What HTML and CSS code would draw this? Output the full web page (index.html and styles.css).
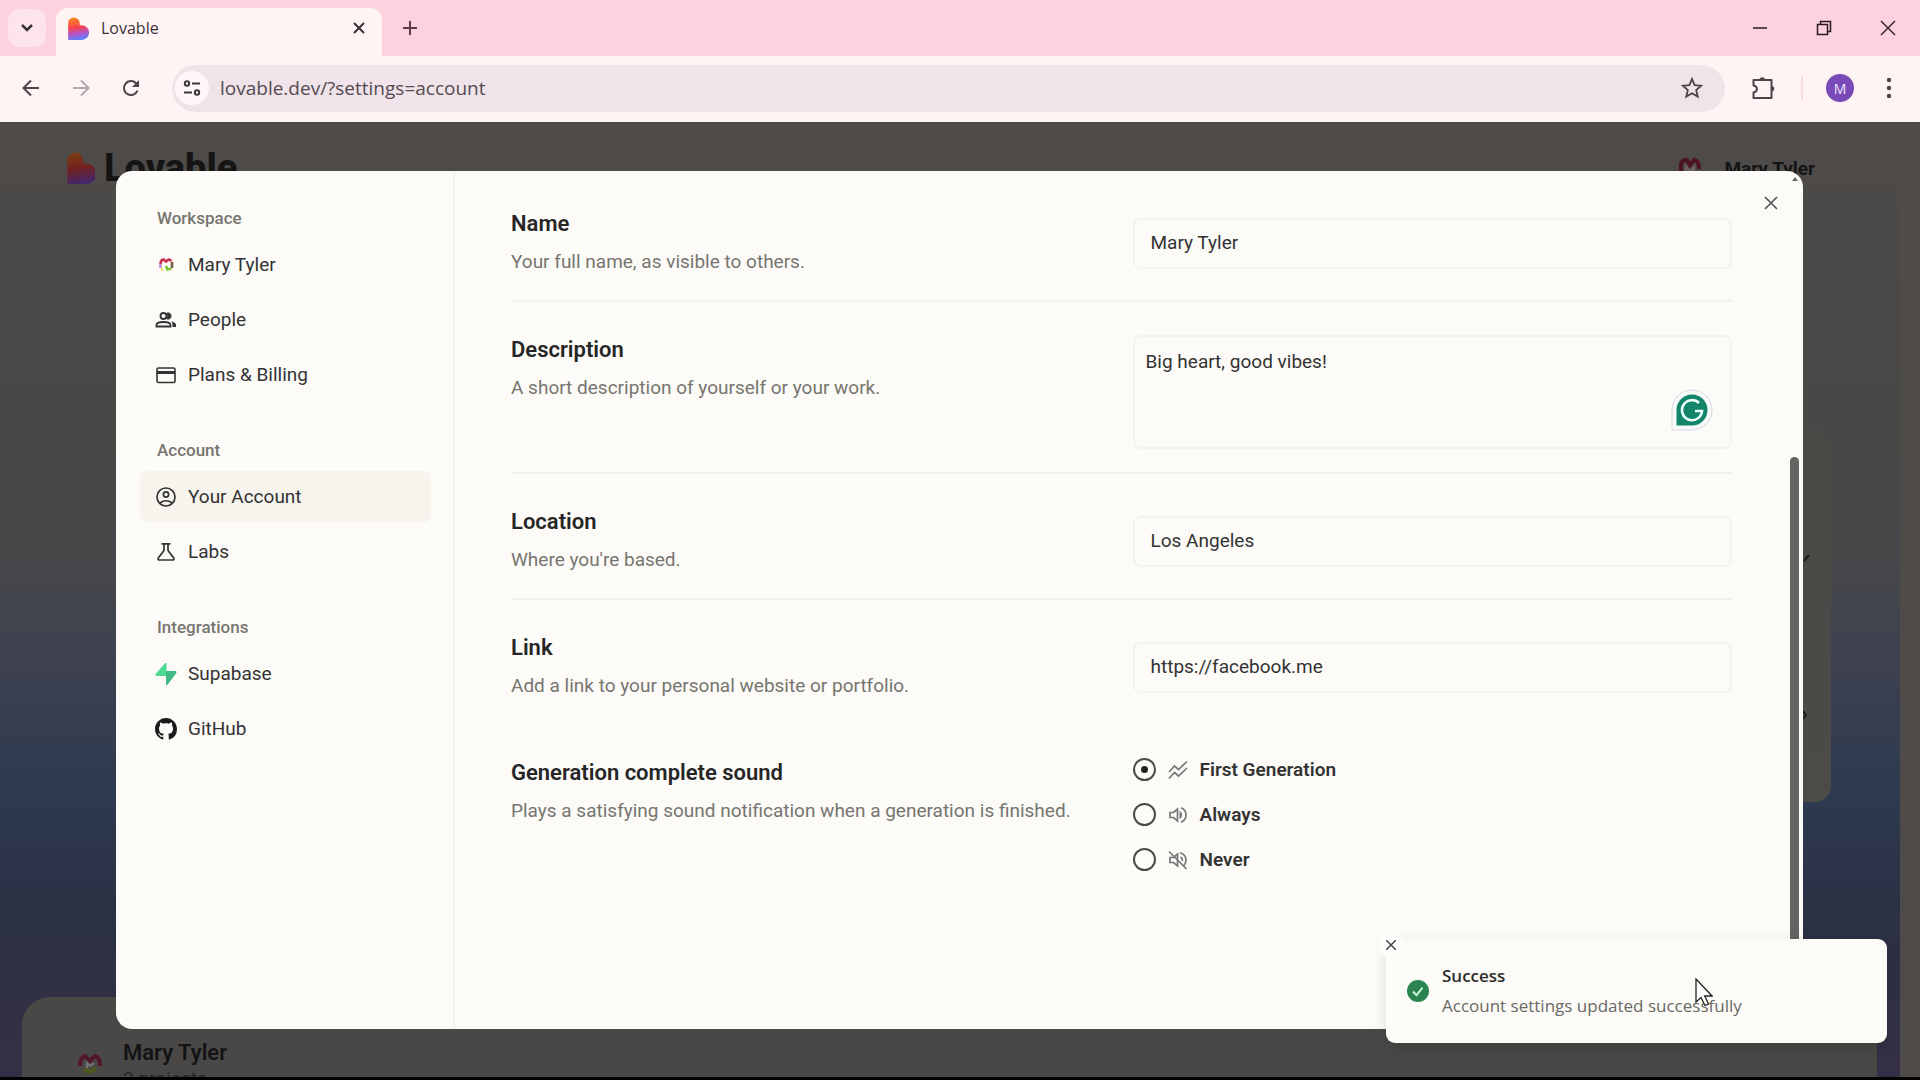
FILE: index.html
```html
<!DOCTYPE html>
<html lang="en">
<head>
  <meta charset="UTF-8">
  <meta name="viewport" content="width=device-width, initial-scale=1.0">
  <title>Lovable</title>
  <link rel="stylesheet" href="styles.css">
</head>
<body>

  <!-- shared shapes -->
  <svg class="defs" width="0" height="0">
    <defs>
      <linearGradient id="heartFill" x1="0.3" y1="0" x2="0.45" y2="1">
        <stop offset="0" stop-color="#ff8a1f"/>
        <stop offset="0.45" stop-color="#f5424e"/>
        <stop offset="0.72" stop-color="#b455c8"/>
        <stop offset="1" stop-color="#5b82ff"/>
      </linearGradient>
      <linearGradient id="heartDim" x1="0.3" y1="0" x2="0.45" y2="1">
        <stop offset="0" stop-color="#7d3c12"/>
        <stop offset="0.5" stop-color="#702020"/>
        <stop offset="1" stop-color="#45266f"/>
      </linearGradient>
      <symbol id="heart" viewBox="0 0 24 28">
        <path d="M0 7.500a7 7 0 0 1 14 0V10h2.500a8.500 8.500 0 0 1 0 18H0z"/>
      </symbol>
    </defs>
  </svg>

  <div class="tab-strip">
    <button class="tab-search" aria-label="Search tabs">
      <svg width="14" height="10" viewBox="0 0 14 10"><path d="M2 2l5 5 5-5" fill="none" stroke="#3a3136" stroke-width="2.500"/></svg>
    </button>
    <div class="tab">
      <svg class="tab-icon" width="22" height="23" fill="url(#heartFill)"><use href="#heart"/></svg>
      <span class="tab-title">Lovable</span>
      <button class="plain" aria-label="Close tab">
        <svg width="12" height="12" viewBox="0 0 12 12"><path d="M1 1l10 10M11 1L1 11" stroke="#3a3136" stroke-width="2"/></svg>
      </button>
    </div>
    <button class="plain new-tab" aria-label="New tab">
      <svg width="16" height="16" viewBox="0 0 16 16"><path d="M8 1v14M1 8h14" stroke="#5f3b49" stroke-width="2"/></svg>
    </button>
    <div class="window-buttons">
      <button class="plain" aria-label="Minimize"><svg width="16" height="16" viewBox="0 0 16 16"><path d="M1 8h14" stroke="#2b1a20" stroke-width="1.500"/></svg></button>
      <button class="plain" aria-label="Restore"><svg width="16" height="16" viewBox="0 0 16 16"><path d="M1.500 4.500h10v10h-10zM4.500 4.500v-3h10v10h-3" fill="none" stroke="#2b1a20" stroke-width="1.500"/></svg></button>
      <button class="plain" aria-label="Close"><svg width="16" height="16" viewBox="0 0 16 16"><path d="M1 1l14 14M15 1L1 15" stroke="#3a2a30" stroke-width="1.500"/></svg></button>
    </div>
  </div>

  <div class="toolbar">
    <button class="plain nav-button" aria-label="Back"><svg width="18" height="18" viewBox="0 0 18 18"><path d="M17 9H2M9 1.500L1.500 9 9 16.500" fill="none" stroke="#4b4347" stroke-width="2"/></svg></button>
    <button class="plain nav-button" aria-label="Forward"><svg width="18" height="18" viewBox="0 0 18 18"><path d="M1 9h15M9 1.500L16.500 9 9 16.500" fill="none" stroke="#b3aaad" stroke-width="2"/></svg></button>
    <button class="plain nav-button" aria-label="Reload"><svg width="18" height="18" viewBox="0 0 18 18"><path d="M15.500 11.500A7 7 0 1 1 14 4.200l2 2.300" fill="none" stroke="#4b4347" stroke-width="2"/><path d="M17 1v7h-7z" fill="#4b4347"/></svg></button>
    <div class="address-bar">
      <button class="site-info" aria-label="View site information">
        <svg width="18" height="18" viewBox="0 0 18 18"><g fill="none" stroke="#3f393c" stroke-width="2"><circle cx="4" cy="4.500" r="2.200"/><path d="M9 4.500h8M1 13.500h8"/><circle cx="14" cy="13.500" r="2.200"/></g></svg>
      </button>
      <input class="address" type="text" aria-label="Address" value="lovable.dev/?settings=account">
      <button class="plain" aria-label="Bookmark this tab">
        <svg width="22" height="22" viewBox="0 0 22 22"><path d="M11 2l2.600 6.100 6.600.6-5 4.400 1.500 6.500L11 16.200l-5.700 3.400 1.500-6.500-5-4.400 6.600-.6z" fill="none" stroke="#4b4347" stroke-width="1.800"/></svg>
      </button>
    </div>
    <button class="plain extensions" aria-label="Extensions">
      <svg width="24" height="24" viewBox="0 0 24 24"><path d="M2.500 4h18v18h-18v-5.500c4.500-.6 4.500-6.400 0-7z" fill="none" stroke="#4b4347" stroke-width="2" stroke-linejoin="round"/><path d="M8.500 4a2.700 2.700 0 0 1 5.400 0zM20.500 10a2.700 2.700 0 0 1 0 5.400z" fill="#4b4347"/></svg>
    </button>
    <span class="toolbar-divider"></span>
    <button class="profile" aria-label="Profile">M</button>
    <button class="plain" aria-label="Menu">
      <svg width="6" height="22" viewBox="0 0 6 22" fill="#4b4347"><circle cx="3" cy="3" r="2.200"/><circle cx="3" cy="11" r="2.200"/><circle cx="3" cy="19" r="2.200"/></svg>
    </button>
  </div>

  <div class="viewport">

    <!-- Page under the dialog -->
    <div class="page">
      <div class="page-header">
        <svg width="28" height="32" fill="url(#heartDim)"><use href="#heart"/></svg>
        <span class="brand">Lovable</span>
        <span class="page-user">
          <svg width="24" height="24" viewBox="0 0 24 24" fill="none" stroke-width="4"><path d="M3 18V8q2-5 6-4l3 5 4-5q5 0 5 9" stroke="#4f1422"/><path d="M8 17v-6l4 4 4-4v5" stroke="#6d6468" stroke-width="2"/></svg>
          Mary Tyler
        </span>
      </div>
      <div class="prompt-card">
        <svg class="prompt-mark" width="8" height="170" viewBox="0 0 8 170" fill="none" stroke="#1c1c1c" stroke-width="2"><path d="M1 8l5-6M0 158l3 4-3 4"/></svg>
      </div>
      <div class="projects-card">
        <svg width="26" height="22" viewBox="0 0 26 22" fill="none" stroke-width="4"><path d="M3 13q0-9 5-10l5 5 5-5q5 1 5 10" stroke="#54172a"/><path d="M7 16q6 5 12-1" stroke="#4c5a1c"/><path d="M10 15v-5l3 3 4-3" stroke="#777" stroke-width="2"/></svg>
        <div>
          <div class="projects-name">Mary Tyler</div>
          <div class="projects-count">2 projects</div>
        </div>
      </div>
      <div class="page-scroll"></div>
    </div>

    <!-- Settings dialog -->
    <div class="dialog" role="dialog" aria-label="Settings">
      <nav class="sidebar">
        <div class="group">
          <div class="group-title">Workspace</div>
          <a class="item" href="#">
            <svg width="20" height="20" viewBox="0 0 20 20" fill="none" stroke-width="2.600"><path d="M4.500 9q0-4 3-4.500l2.500 2 2.500-2q2 0 2.500 2" stroke="#c9304f"/><path d="M4.500 9v4" stroke="#c58ad0"/><path d="M16 7v6" stroke="#6f5a3c"/><path d="M5 14.500h2" stroke="#eddc4a"/><path d="M10 11l1.500 3.500 4-1" stroke="#7cbf3a"/></svg>
            Mary Tyler
          </a>
          <a class="item" href="#">
            <svg width="22" height="20" viewBox="0 0 22 20" fill="none" stroke="#333" stroke-width="1.800"><circle cx="8.500" cy="6" r="3"/><path d="M1.500 16.500v-1.500q0-3 7-3t7 3v1.500z"/><path d="M12 3q4-.6 4 3t-4 3q2-3 0-6z" fill="#333" stroke-width="1"/><path d="M16.500 11.500q4.500 1 4.500 3.500v2h-3.500v-2q0-2-1-3.500z" fill="#333" stroke="none"/></svg>
            People
          </a>
          <a class="item" href="#">
            <svg width="20" height="20" viewBox="0 0 20 20" fill="none" stroke="#333"><rect x="1" y="3" width="18" height="14.500" rx="1.500" stroke-width="1.600"/><path d="M1 7.500h18" stroke-width="3"/></svg>
            Plans &amp; Billing
          </a>
        </div>
        <div class="group">
          <div class="group-title">Account</div>
          <a class="item active" href="#">
            <svg width="20" height="20" viewBox="0 0 20 20" fill="none" stroke="#333" stroke-width="1.700"><circle cx="10" cy="10" r="9"/><circle cx="10" cy="7.500" r="2.600"/><path d="M4 16q6-4.500 12 0"/></svg>
            Your Account
          </a>
          <a class="item" href="#">
            <svg width="20" height="20" viewBox="0 0 20 20" fill="none" stroke="#333" stroke-width="1.700"><path d="M5.500 1.800h9M8 2v6.500L2.300 16q-.8 2 1.200 2h13q2 0 1.200-2L12 8.500V2"/></svg>
            Labs
          </a>
        </div>
        <div class="group">
          <div class="group-title">Integrations</div>
          <a class="item" href="#">
            <svg width="22" height="22" viewBox="0 0 22 22"><path d="M11.500 0v13H2q-2.500-.3-1-2.500L9.800.5Q11 -.5 11.500 0z" fill="#4cd992"/><path d="M11 22V8h9q2.500.3 1 2.500L12.700 21.500Q11.500 22.500 11 22z" fill="#40b983"/></svg>
            Supabase
          </a>
          <a class="item" href="#">
            <svg width="22" height="22" viewBox="0 0 16 16"><path fill="#1b1b1b" d="M8 0C3.580 0 0 3.580 0 8c0 3.540 2.290 6.530 5.470 7.590.4.070.55-.17.55-.38 0-.19-.01-.82-.01-1.490-2.010.37-2.530-.49-2.690-.94-.09-.23-.48-.94-.82-1.130-.28-.15-.68-.52-.01-.53.63-.01 1.080.58 1.230.82.72 1.210 1.870.87 2.330.66.070-.52.28-.87.51-1.070-1.780-.2-3.640-.89-3.640-3.950 0-.87.31-1.590.82-2.150-.08-.2-.36-1.020.08-2.120 0 0 .67-.21 2.200.82.64-.18 1.320-.27 2-.27s1.360.09 2 .27c1.530-1.040 2.200-.82 2.200-.82.44 1.100.16 1.920.08 2.120.51.56.82 1.270.82 2.150 0 3.070-1.870 3.750-3.650 3.950.29.25.54.73.54 1.480 0 1.070-.01 1.930-.01 2.200 0 .21.15.46.55.38A8.010 8.010 0 0 0 16 8c0-4.420-3.580-8-8-8z"/></svg>
            GitHub
          </a>
        </div>
      </nav>

      <form class="settings">
        <div class="row">
          <div class="text">
            <label class="heading" for="name">Name</label>
            <p class="hint">Your full name, as visible to others.</p>
          </div>
          <input class="field" type="text" id="name" value="Mary Tyler">
        </div>
        <div class="row">
          <div class="text">
            <label class="heading" for="description">Description</label>
            <p class="hint">A short description of yourself or your work.</p>
          </div>
          <div class="area-wrap">
            <textarea class="field area" id="description" spellcheck="false">Big heart, good vibes!</textarea>
            <svg class="grammar" width="42" height="42" viewBox="0 0 42 42" fill="none"><path d="M1 41V21a20 20 0 1 1 20 20z" fill="#f6fbfa" stroke="#d9d6e3"/><path d="M5.500 36.500V21A15.500 15.500 0 1 1 21 36.500z" fill="#12846a"/><path d="M28 14a10 10 0 1 0 3 8h-7" stroke="#e8fffa" stroke-width="2.600"/></svg>
          </div>
        </div>
        <div class="row">
          <div class="text">
            <label class="heading" for="location">Location</label>
            <p class="hint">Where you're based.</p>
          </div>
          <input class="field" type="text" id="location" value="Los Angeles">
        </div>
        <div class="row last">
          <div class="text">
            <label class="heading" for="link">Link</label>
            <p class="hint">Add a link to your personal website or portfolio.</p>
          </div>
          <input class="field" type="text" id="link" value="https://facebook.me">
        </div>
        <div class="row last">
          <div class="text">
            <div class="heading" id="soundTitle">Generation complete sound</div>
            <p class="hint">Plays a satisfying sound notification when a generation is finished.</p>
          </div>
          <div class="options" role="radiogroup" aria-labelledby="soundTitle">
            <label class="option">
              <input class="radio" type="radio" name="sound" checked>
              <svg width="20" height="20" viewBox="0 0 20 20" fill="none" stroke="#777" stroke-width="1.700"><path d="M1 12l5.500-6 4 3.500L19 1.500M1 18.500l5.500-6 4 3.500L19 8"/></svg>
              First Generation
            </label>
            <label class="option">
              <input class="radio" type="radio" name="sound">
              <svg width="20" height="20" viewBox="0 0 20 20" fill="none" stroke="#777" stroke-width="1.700"><path d="M2 7.500h3.500L9.500 4v12l-4-3.500H2z"/><path d="M12 6.500q3.500 3.500 0 7z" fill="#777" stroke-width="1"/><path d="M13 2.800q5 2 5 7.200t-5 7.200"/></svg>
              Always
            </label>
            <label class="option">
              <input class="radio" type="radio" name="sound">
              <svg width="20" height="20" viewBox="0 0 20 20" fill="none" stroke="#777" stroke-width="1.700"><path d="M1 1.500L18.500 19M2 7.500h3.500L9.500 4v12l-4-3.500H2zM12.500 7q2 1 2 4"/><path d="M12 2.800q6 2 6 7.200 0 3-2 5.500"/></svg>
              Never
            </label>
          </div>
        </div>
        <button class="plain dialog-close" type="button" aria-label="Close settings">
          <svg width="14" height="14" viewBox="0 0 14 14"><path d="M1 1l12 12M13 1L1 13" stroke="#555" stroke-width="1.700"/></svg>
        </button>
        <span class="scroll-up"></span>
        <span class="scroll-thumb"></span>
      </form>
    </div>

    <div class="toast" role="status">
      <button class="toast-close" aria-label="Close toast">
        <svg width="10" height="10" viewBox="0 0 10 10"><path d="M0 0l10 10M10 0L0 10" stroke="#444" stroke-width="1.500"/></svg>
      </button>
      <svg width="22" height="22" viewBox="0 0 22 22"><circle cx="11" cy="11" r="11" fill="#2b8450"/><path d="M6 11.500l3.500 3.700 6-7.500" fill="none" stroke="#c8f5d6" stroke-width="2"/></svg>
      <div>
        <div class="toast-title">Success</div>
        <div class="toast-text">Account settings updated successfully</div>
      </div>
      <svg class="cursor" width="18" height="28" viewBox="0 0 18 28"><path d="M1 1v23l5-4.500 4 8 3.500-1.500-3.800-8H17z" fill="#fff" stroke="#222" stroke-width="1.300"/></svg>
    </div>
  </div>

</body>
</html>
```

FILE: styles.css
```css
* {
  box-sizing: border-box;
}
body, html {
  margin: 0;
  padding: 0;
  height: 100%;
}
body {
  display: flex;
  flex-direction: column;
  overflow: hidden;
  font-family: Roboto, "Liberation Sans", sans-serif;
  font-size: 19px;
  color: #333;
  background: #000;
}
svg {
  flex: none;
  display: block;
}
button {
  font: inherit;
  cursor: pointer;
}
.defs {
  position: absolute;
}
.plain {
  display: flex;
  padding: 0;
  border: none;
  background: none;
}

/* browser bars */
.tab-strip {
  display: flex;
  align-items: center;
  height: 56px;
  padding: 0 24px 0 8px;
  background: #fbd2de;
  font-family: "Open Sans", "Noto Sans", sans-serif;
}
.tab-search {
  display: flex;
  align-items: center;
  justify-content: center;
  width: 38px;
  height: 38px;
  padding: 0;
  border: none;
  border-radius: 12px;
  background: #fde4ea;
}
.tab {
  display: flex;
  align-items: center;
  align-self: flex-end;
  gap: 12px;
  width: 326px;
  height: 48px;
  margin-left: 10px;
  padding: 0 17px 8px 11px;
  border-radius: 12px 12px 0 0;
  background: #fff4f4;
}
.tab-title {
  flex: 1;
  font-size: 16px;
  color: #3a3136;
}
.new-tab {
  margin-left: 20px;
}
.window-buttons {
  display: flex;
  gap: 48px;
  margin-left: auto;
}
.toolbar {
  display: flex;
  align-items: center;
  height: 66px;
  padding: 0 28px 2px 22px;
  background: #fff4f4;
  font-family: "Open Sans", "Noto Sans", sans-serif;
}
.nav-button {
  margin-right: 32px;
}
.address-bar {
  display: flex;
  align-items: center;
  flex: 1;
  height: 47px;
  padding: 0 22px 0 3px;
  border-radius: 24px;
  background: #f0e3ea;
}
.site-info {
  display: flex;
  align-items: center;
  justify-content: center;
  width: 34px;
  height: 34px;
  padding: 0;
  border: none;
  border-radius: 50%;
  background: #fff6f7;
}
.address {
  flex: 1;
  height: 40px;
  padding: 0 11px;
  border: none;
  outline: none;
  background: none;
  font: inherit;
  font-size: 19px;
  color: #544b50;
}
.extensions {
  margin-left: 26px;
}
.toolbar-divider {
  width: 2px;
  height: 24px;
  margin: 0 23px 0 26px;
  background: #fbdbe4;
}
.profile {
  width: 28px;
  height: 28px;
  margin-right: 32px;
  padding: 0;
  border: none;
  border-radius: 50%;
  background: #7a4bb8;
  color: #f3e9ff;
  font-size: 14px;
}

/* dimmed page */
.viewport {
  position: relative;
  flex: 1;
  min-height: 0;
  padding: 49px 117px 48px 116px;
  border-bottom: 3px solid #000;
}
.page {
  position: absolute;
  inset: 0;
  display: flex;
  flex-direction: column;
  overflow: hidden;
  padding: 29px 43px 0 22px;
  background: linear-gradient(#4e4b49, #484846 30%, #47474a 46%, #3d4150 57%, #2e3a50 70%, #2b3145 82%, #352f45 100%);
  color: #141414;
}
.page-header {
  display: flex;
  align-items: center;
  height: 34px;
  padding: 0 62px 0 45px;
}
.brand {
  margin-left: 9px;
  font-size: 38px;
  font-weight: 800;
}
.page-user {
  display: flex;
  align-items: center;
  gap: 22px;
  margin-left: auto;
  font-size: 19px;
  font-weight: 700;
}
.prompt-card {
  flex: 1;
  display: flex;
  justify-content: flex-end;
  margin: 200px 46px 195px 94px;
  padding: 168px 20px 0 0;
  border-radius: 0 0 16px 16px;
  background: linear-gradient(#484846, #4c4b47);
}
.projects-card {
  display: flex;
  flex: none;
  gap: 20px;
  height: 80px;
  padding: 40px 55px 0;
  border-radius: 28px 28px 0 0;
  background: #4a4847;
}
.projects-card svg {
  margin-top: 16px;
}
.projects-name {
  line-height: 32px;
  font-size: 22px;
  font-weight: 600;
}
.projects-count {
  line-height: 20px;
  font-size: 19px;
  color: #262524;
}
.page-scroll {
  position: absolute;
  top: 0;
  right: 0;
  bottom: 0;
  width: 20px;
  background: #4f4b48;
}

/* settings dialog */
.dialog {
  position: relative;
  display: flex;
  height: 100%;
  border-radius: 16px;
  background: #fcfbf8;
  overflow: hidden;
}
.sidebar {
  display: flex;
  flex-direction: column;
  gap: 38px;
  width: 339px;
  padding: 35px 22px 0 24px;
  border-right: 2px solid #f3f2ef;
}
.group {
  display: flex;
  flex-direction: column;
  gap: 4px;
}
.group-title {
  margin-bottom: 5px;
  padding-left: 17px;
  line-height: 24px;
  font-size: 17px;
  font-weight: 500;
  color: #77756f;
}
.item {
  display: flex;
  align-items: center;
  height: 51px;
  padding-left: 48px;
  border-radius: 6px;
  color: #333;
  font-size: 19px;
  text-decoration: none;
}
.item svg {
  width: 22px;
  margin: 0 11px 0 -33px;
}
.active {
  background: #f7f4ee;
}
.settings {
  flex: 1;
  padding: 38px 71px 0 56px;
}
.row {
  display: grid;
  grid-template-columns: 1fr 1fr;
  gap: 22px;
  align-items: center;
  padding-bottom: 23px;
  margin-bottom: 33px;
  border-bottom: 2px solid #f3f2ef;
}
.last {
  margin-bottom: 34px;
  border-bottom: none;
}
.text {
  align-self: start;
}
.heading {
  display: block;
  line-height: 30px;
  font-size: 22px;
  font-weight: 600;
  color: #262626;
}
.hint {
  margin: 8px 0 0;
  line-height: 30px;
  font-size: 19px;
  color: #77756f;
  white-space: nowrap;
}
.field {
  display: block;
  width: 100%;
  height: 51px;
  padding: 0 16px 2px;
  border: 2px solid #f4f2ee;
  border-radius: 8px;
  outline: none;
  background: none;
  font: inherit;
  font-size: 19px;
  color: #333;
}
.area-wrap {
  position: relative;
}
.area {
  height: 114px;
  padding: 11px;
  line-height: 28px;
  resize: none;
}
.grammar {
  position: absolute;
  right: 19px;
  bottom: 18px;
}
.options {
  display: flex;
  flex-direction: column;
  align-self: start;
  gap: 22px;
}
.option {
  display: flex;
  align-items: center;
  gap: 12px;
  line-height: 23px;
  font-size: 19px;
  font-weight: 600;
}
.radio {
  display: grid;
  place-items: center;
  appearance: none;
  width: 23px;
  height: 23px;
  margin: 0;
  border: 2px solid #4a4a4a;
  border-radius: 50%;
}
.radio:checked::before {
  content: '';
  width: 7px;
  height: 7px;
  border-radius: 50%;
  background: #222;
}
.dialog-close {
  position: absolute;
  top: 25px;
  right: 25px;
}
.scroll-up {
  position: absolute;
  top: 6px;
  right: 5px;
  border: 3px solid transparent;
  border-top: none;
  border-bottom: 4px solid #666;
}
.scroll-thumb {
  position: absolute;
  top: 286px;
  right: 4px;
  bottom: 4px;
  width: 9px;
  border-radius: 5px;
  background: #636362;
}

/* toast */
.toast {
  position: absolute;
  right: 33px;
  bottom: 34px;
  display: flex;
  align-items: center;
  gap: 13px;
  width: 501px;
  height: 104px;
  padding: 0 21px;
  border-radius: 9px;
  background: #fcfbf8;
  box-shadow: 0 4px 14px rgba(0, 0, 0, 0.12);
  font-family: "Open Sans", "Noto Sans", sans-serif;
}
.toast-close {
  position: absolute;
  top: -7px;
  left: -8px;
  display: flex;
  align-items: center;
  justify-content: center;
  width: 25px;
  height: 25px;
  padding: 0;
  border: none;
  border-radius: 50%;
  background: #fdfdfb;
}
.toast-title {
  line-height: 30px;
  font-size: 17px;
  font-weight: 600;
  color: #2b2b2b;
}
.toast-text {
  line-height: 30px;
  font-size: 17px;
  color: #6a6964;
}
.cursor {
  position: absolute;
  top: 39px;
  left: 309px;
}
```
